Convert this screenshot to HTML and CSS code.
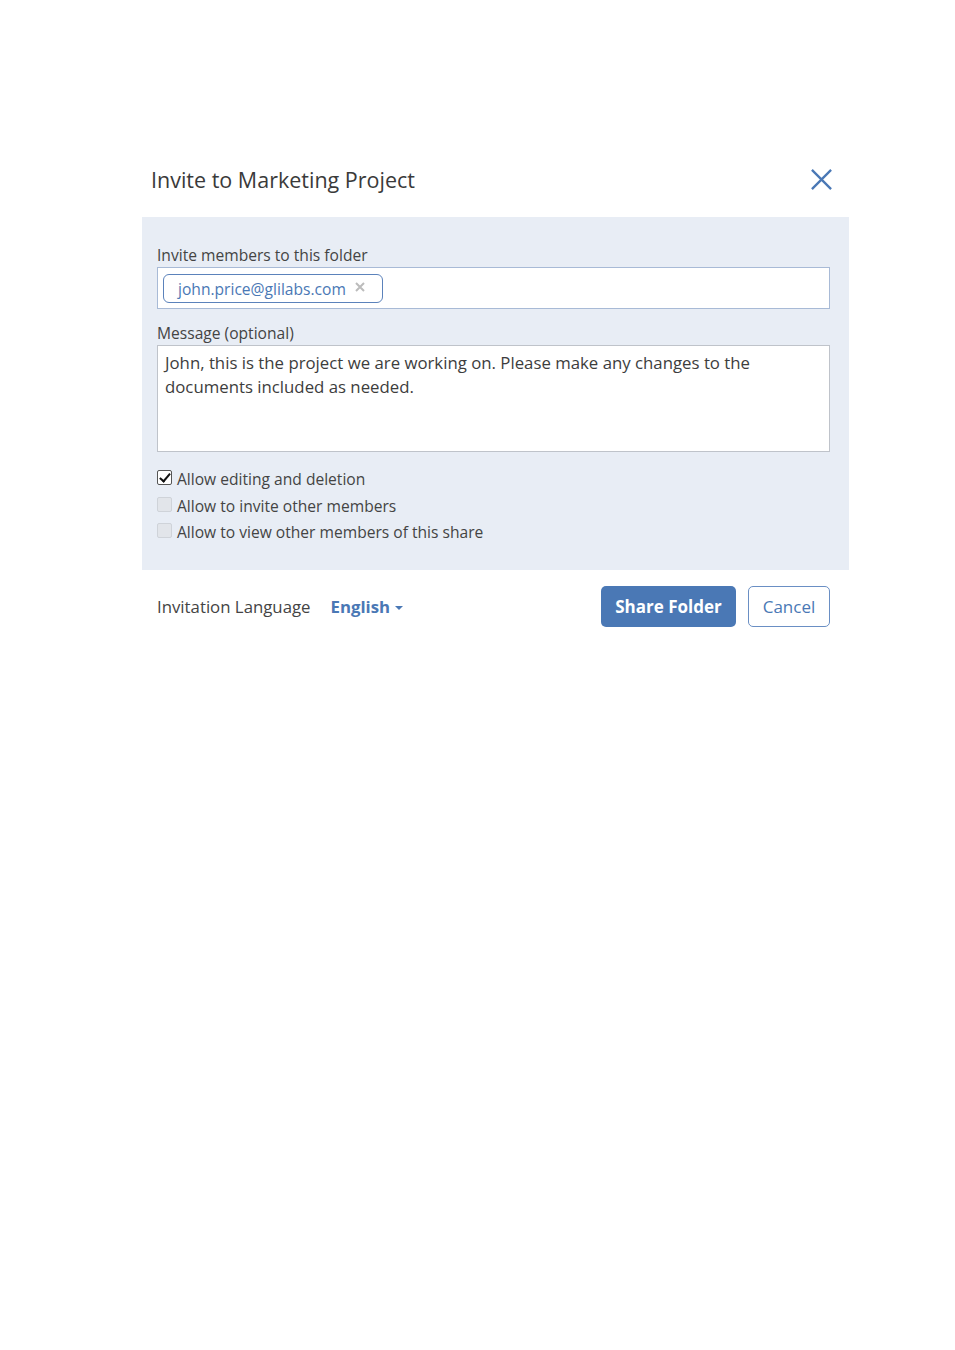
FILE: index.html
```html
<!DOCTYPE html>
<html lang="en">
<head>
    <meta charset="UTF-8">
    <meta name="viewport" content="width=device-width, initial-scale=1.0">
    <title>Invite to Marketing Project</title>
    <link rel="stylesheet" href="styles.css">
</head>
<body>
    <div class="dialog">
        <div class="dialog-header">
            <h2>Invite to Marketing Project</h2>
            <button class="close-btn" aria-label="Close">
                <svg width="23" height="23" viewBox="0 0 24 24">
                    <path d="M2 2 L22 22 M22 2 L2 22" stroke="#4a78b5" stroke-width="2.4" fill="none"/>
                </svg>
            </button>
        </div>

        <div class="dialog-body">
            <label class="field-label">Invite members to this folder</label>
            <div class="recipients">
                <span class="chip">john.price@glilabs.com
                    <svg class="chip-remove" width="10" height="10" viewBox="0 0 10 10">
                        <path d="M1 1 L9 9 M9 1 L1 9" stroke="#bcbcbc" stroke-width="2" fill="none"/>
                    </svg>
                </span>
            </div>

            <label class="field-label">Message (optional)</label>
            <div class="message">John, this is the project we are working on. Please make any changes to the documents included as needed.</div>

            <div class="options">
                <label class="option"><span class="box checked"></span>Allow editing and deletion</label>
                <label class="option"><span class="box"></span>Allow to invite other members</label>
                <label class="option"><span class="box"></span>Allow to view other members of this share</label>
            </div>
        </div>

        <div class="dialog-footer">
            <span class="lang-label">Invitation Language</span>
            <span class="lang-select">English <span class="caret"></span></span>
            <div class="actions">
                <button class="btn-primary">Share Folder</button>
                <button class="btn-secondary">Cancel</button>
            </div>
        </div>
    </div>
</body>
</html>
```

FILE: styles.css
```css
* {
    margin: 0;
    padding: 0;
    box-sizing: border-box;
    font-family: 'Open Sans', sans-serif;
}

body {
    background-color: white;
    padding-top: 160px;
}

.dialog {
    width: 707px;
    margin-left: 142px;
}

.dialog-header {
    display: flex;
    justify-content: space-between;
    align-items: center;
    height: 57px;
    padding: 0 16px 18px 9px;
}

h2 {
    font-size: 21.5px;
    font-weight: 400;
    color: #3a3a3a;
}

.close-btn {
    background: none;
    border: none;
    width: 23px;
    height: 23px;
    cursor: pointer;
}

.dialog-body {
    background-color: #e8edf5;
    padding: 26px 19px 24px 15px;
}

.field-label {
    display: block;
    font-size: 15.6px;
    color: #444;
    line-height: 24px;
}

.recipients {
    height: 42px;
    background: white;
    border: 1px solid #a8bad6;
    padding: 6px 5px;
    margin-bottom: 12px;
}

.chip {
    display: inline-flex;
    align-items: center;
    height: 29px;
    padding: 0 17px 0 14px;
    border: 1px solid #5b82bb;
    border-radius: 6px;
    color: #4a78b5;
    font-size: 15.6px;
}

.chip-remove {
    margin-left: 9px;
    margin-top: -4px;
}

.message {
    height: 107px;
    background: white;
    border: 1px solid #bfc3ca;
    padding: 5px 7px;
    font-size: 16.8px;
    line-height: 24px;
    color: #3d3d3d;
    margin-bottom: 14px;
}

.options {
    display: flex;
    flex-direction: column;
}

.option {
    display: flex;
    align-items: center;
    gap: 5px;
    font-size: 15.6px;
    line-height: 26.5px;
    color: #444;
}

.box {
    width: 15px;
    height: 15px;
    border: 1px solid #cfd3d9;
    background: #e2e5ea;
    border-radius: 2px;
    position: relative;
    margin-top: -3px;
}

.box.checked {
    background: white;
    border-color: #555;
}

.box.checked::after {
    content: '';
    position: absolute;
    left: 4px;
    top: 0px;
    width: 4px;
    height: 9px;
    border: solid #111;
    border-width: 0 2.5px 2.5px 0;
    transform: rotate(40deg);
}

.dialog-footer {
    display: flex;
    align-items: center;
    padding: 16px 19px 0 15px;
}

.lang-label {
    font-size: 16.8px;
    color: #444;
}

.lang-select {
    margin-left: 20px;
    font-size: 16.8px;
    font-weight: 700;
    color: #4a78b5;
    display: inline-flex;
    align-items: center;
}

.caret {
    width: 0;
    height: 0;
    border-left: 4.5px solid transparent;
    border-right: 4.5px solid transparent;
    border-top: 4.5px solid #4a78b5;
    margin-left: 5px;
    margin-top: 3px;
}

.actions {
    margin-left: auto;
    display: flex;
    gap: 12px;
}

.btn-primary {
    height: 41px;
    width: 135px;
    background-color: #4a78b5;
    color: white;
    border: none;
    border-radius: 5px;
    font-size: 17px;
    font-weight: 700;
    cursor: pointer;
}

.btn-secondary {
    height: 41px;
    width: 82px;
    background: white;
    color: #4a78b5;
    border: 1px solid #6a8fc4;
    border-radius: 5px;
    font-size: 17px;
    cursor: pointer;
}
```
